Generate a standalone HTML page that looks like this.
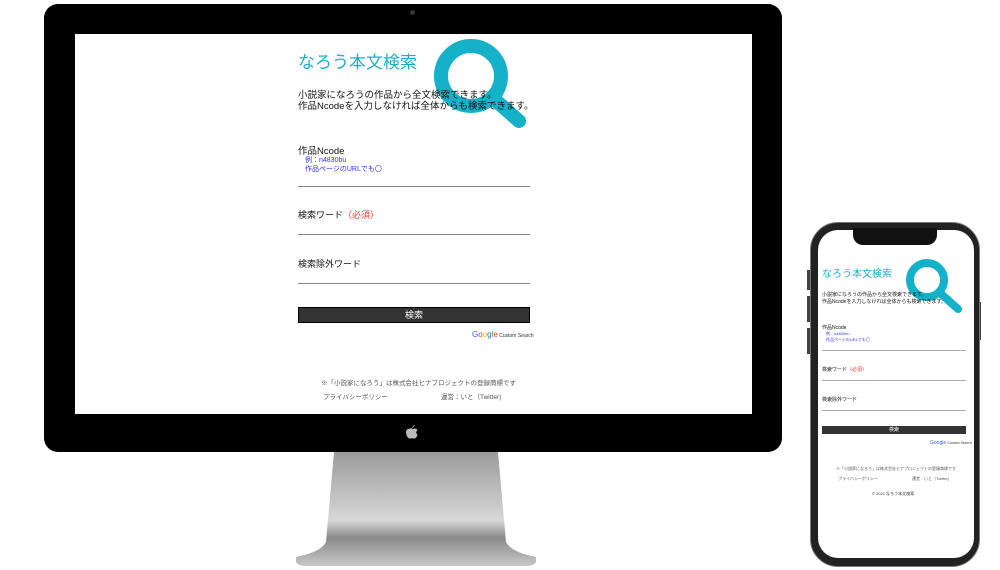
<!DOCTYPE html>
<html><head><meta charset="utf-8"><style>
body{margin:0;width:1000px;height:570px;background:#fff;position:relative;overflow:hidden;font-family:"Liberation Sans","Noto Sans CJK JP",sans-serif}
.a{position:absolute}
.mon{left:44px;top:4px;width:738px;height:448px;background:#000;border-radius:14px}
.scr{left:75px;top:34px;width:677px;height:380px;background:#fff}
.t{font-size:11px;color:#111;white-space:nowrap}
.line{height:1px;background:#888}
.btn{background:#333;border:1px solid #000;color:#fff;font-size:9px;text-align:center}
</style></head><body>
<div class="a mon"></div>
<div class="a" style="left:410px;top:10px;width:5px;height:5px;border-radius:50%;background:#333"></div>
<div class="a scr"></div>
<svg class="a" style="left:296px;top:452px" width="240" height="118">
<defs><linearGradient id="g" x1="0" y1="0" x2="0" y2="1"><stop offset="0" stop-color="#9a9a9a"/><stop offset=".6" stop-color="#d8d8d8"/><stop offset=".75" stop-color="#8a8a8a"/><stop offset="1" stop-color="#c8c8c8"/></linearGradient></defs>
<path d="M38 0 L202 0 L210 90 Q215 100 240 105 L240 110 Q238 114 230 114 L10 114 Q2 114 0 110 L0 105 Q25 100 30 90 Z" fill="url(#g)"/>
</svg>
<svg class="a" style="left:405px;top:424px" width="14" height="16"><path d="M7 4 Q8 1 10 1 Q9 3 7 4Z M3 5 Q7 3.5 8 5 Q11 3.5 12.5 6 Q10 8 12.5 11 Q11 15 9 14.5 Q7 14 5 14.5 Q3 15 1.5 11 Q0 6 3 5Z" fill="#bbb"/></svg>
<!-- desktop content -->
<div class="a" style="left:298px;top:48px;font-size:17px;color:#1ab0c8">なろう本文検索</div>
<svg class="a" style="left:431px;top:38px" width="100" height="94"><circle cx="40" cy="38" r="30" fill="none" stroke="#14b1c9" stroke-width="14"/><line x1="63" y1="61" x2="88" y2="83" stroke="#14b1c9" stroke-width="14" stroke-linecap="round"/></svg>
<div class="a t" style="left:298px;top:90px;line-height:11px;font-size:9.5px">小説家になろうの作品から全文検索できます。<br>作品Ncodeを入力しなければ全体からも検索できます。</div>
<div class="a t" style="left:298px;top:143px;font-size:9.5px">作品Ncode</div>
<div class="a" style="left:305px;top:156px;font-size:7px;color:#3333ee;line-height:9px;white-space:nowrap">例：n4830bu<br>作品ページのURLでも〇</div>
<div class="a line" style="left:298px;top:186px;width:232px"></div>
<div class="a t" style="left:298px;top:208px;font-size:9px">検索ワード<span style="color:#e33">（必須）</span></div>
<div class="a line" style="left:298px;top:234px;width:232px"></div>
<div class="a t" style="left:298px;top:257px;font-size:9px">検索除外ワード</div>
<div class="a line" style="left:298px;top:283px;width:232px"></div>
<div class="a btn" style="left:298px;top:307px;width:230px;height:14px;line-height:14px">検索</div>
<div class="a" style="left:472px;top:330px;font-size:8px;white-space:nowrap"><span style="color:#36c">G</span><span style="color:#d33">o</span><span style="color:#ec0">o</span><span style="color:#36c">g</span><span style="color:#3a3">l</span><span style="color:#d33">e</span><span style="font-size:5px;color:#333"> Custom Search</span></div>
<div class="a" style="left:321px;top:377px;font-size:6.5px;color:#555;white-space:nowrap">※「小説家になろう」は株式会社ヒナプロジェクトの登録商標です</div>
<div class="a" style="left:323px;top:391px;font-size:6.5px;color:#555;white-space:nowrap">プライバシーポリシー</div>
<div class="a" style="left:441px;top:391px;font-size:6.5px;color:#555;white-space:nowrap">運営：いと（Twitter)</div>
<!-- phone -->
<div class="a" style="left:807px;top:270px;width:3px;height:20px;background:#444"></div>
<div class="a" style="left:807px;top:296px;width:3px;height:26px;background:#444"></div>
<div class="a" style="left:807px;top:328px;width:3px;height:26px;background:#444"></div>
<div class="a" style="left:978px;top:302px;width:3px;height:38px;background:#444"></div>
<div class="a" style="left:810px;top:222px;width:170px;height:345px;background:#222;border-radius:28px;border:1px solid #777;box-sizing:border-box"></div>
<div class="a" style="left:818px;top:230px;width:156px;height:328px;background:#fff;border-radius:20px"></div>
<div class="a" style="left:853px;top:228px;width:84px;height:17px;background:#111;border-radius:0 0 10px 10px"></div>
<div class="a" style="left:822px;top:265px;font-size:10px;color:#1ab0c8">なろう本文検索</div>
<svg class="a" style="left:900px;top:255px" width="66" height="62"><circle cx="27" cy="25" r="17" fill="none" stroke="#14b1c9" stroke-width="8"/><line x1="40" y1="38" x2="58" y2="54" stroke="#14b1c9" stroke-width="8" stroke-linecap="round"/></svg>
<div class="a" style="left:822px;top:292px;font-size:5px;line-height:7px;color:#111;white-space:nowrap">小説家になろうの作品から全文検索できます。<br>作品Ncodeを入力しなければ全体からも検索できます。</div>
<div class="a" style="left:822px;top:324px;font-size:5px;color:#111">作品Ncode</div>
<div class="a" style="left:826px;top:331px;font-size:4px;line-height:6px;color:#33e;white-space:nowrap">例：n4830bu<br>作品ページのURLでも〇</div>
<div class="a" style="left:822px;top:350px;width:144px;height:1px;background:#aaa"></div>
<div class="a" style="left:822px;top:366px;font-size:5px;color:#111;white-space:nowrap">検索ワード<span style="color:#e33">（必須）</span></div>
<div class="a" style="left:822px;top:380px;width:144px;height:1px;background:#aaa"></div>
<div class="a" style="left:822px;top:396px;font-size:5px;color:#111">検索除外ワード</div>
<div class="a" style="left:822px;top:410px;width:144px;height:1px;background:#aaa"></div>
<div class="a" style="left:822px;top:426px;width:144px;height:8px;background:#333;color:#fff;font-size:5px;text-align:center;line-height:8px">検索</div>
<div class="a" style="left:930px;top:440px;font-size:5px;color:#36c;white-space:nowrap">Google <span style="color:#333;font-size:3.5px">Custom Search</span></div>
<div class="a" style="left:836px;top:466px;font-size:4px;color:#555;white-space:nowrap">※「小説家になろう」は株式会社ヒナプロジェクトの登録商標です</div>
<div class="a" style="left:838px;top:476px;font-size:4px;color:#555;white-space:nowrap">プライバシーポリシー</div>
<div class="a" style="left:912px;top:476px;font-size:4px;color:#555;white-space:nowrap">運営：いと（Twitter)</div>
<div class="a" style="left:872px;top:491px;font-size:4px;color:#333;white-space:nowrap">© 2021 なろう本文検索</div>
</body></html>
